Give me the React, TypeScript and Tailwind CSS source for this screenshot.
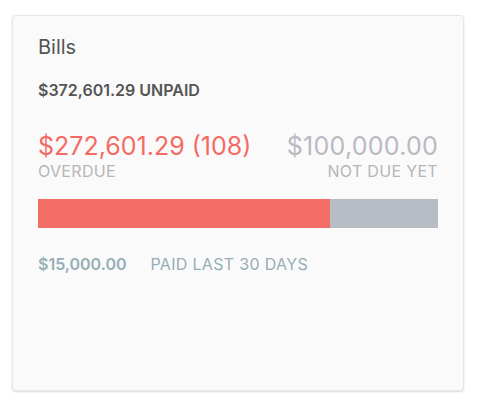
export default function App() {
  return (
    <div className="w-[478px] h-[401px] bg-white pt-[15px] pl-[12px] font-['Inter',sans-serif]">
      <div className="w-[452px] h-[376px] rounded-[4px] border border-[#e6e7ea] bg-[#fafafa] shadow-[0_1px_2px_rgba(0,0,0,0.15)] px-[25px] pt-[19px]">
        <h2 className="text-[20px] leading-[24px] text-[#555]">Bills</h2>
        <p className="mt-[21px] text-[16px] leading-[20px] font-semibold text-[#555]">$372,601.29 UNPAID</p>

        <div className="mt-[30px] flex justify-between items-start">
          <div>
            <div className="text-[25px] leading-[32px] text-[#f46b64]">$272,601.29 (108)</div>
            <div className="text-[16px] leading-[18px] tracking-[0.02em] text-[#b6b6b6]">OVERDUE</div>
          </div>
          <div className="text-right">
            <div className="text-[25px] leading-[32px] tracking-[0.01em] text-[#b7bac0]">$100,000.00</div>
            <div className="text-[16px] leading-[18px] tracking-[0.02em] text-[#b6b6b6]">NOT DUE YET</div>
          </div>
        </div>

        <div className="mt-[19px] flex h-[29px]">
          <div className="w-[292px] bg-[#f46e68]" />
          <div className="flex-1 bg-[#b8bdc5]" />
        </div>

        <div className="mt-[26px] flex gap-[24px] text-[16px] leading-[20px] text-[#96aeb7]">
          <span className="font-semibold">$15,000.00</span>
          <span className="tracking-[0.02em]">PAID LAST 30 DAYS</span>
        </div>
      </div>
    </div>
  )
}
